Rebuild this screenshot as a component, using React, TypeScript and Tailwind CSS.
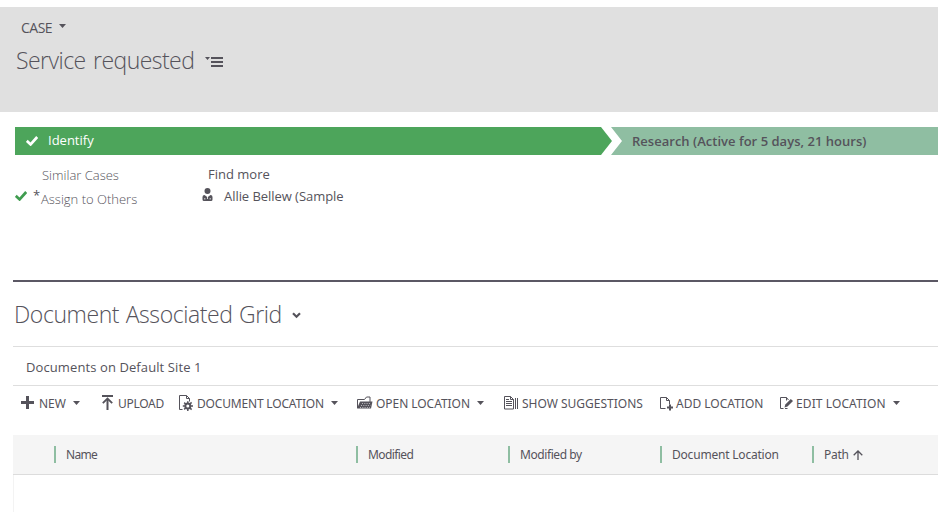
import type { ReactNode } from 'react';

function Caret({ className = '' }: { className?: string }) {
  return (
    <svg width="7" height="4" viewBox="0 0 7 4" className={`shrink-0 ${className}`}>
      <path d="M0 0h7L3.5 4z" fill="currentColor" />
    </svg>
  );
}

function Check({ className }: { className: string }) {
  return (
    <svg width="12" height="10" viewBox="0 0 12 10" className={`shrink-0 ${className}`}>
      <path d="M.8 4.8l3.8 3.6L11.2 1" fill="none" stroke="currentColor" strokeWidth="2.7" />
    </svg>
  );
}

const icons: Record<string, ReactNode> = {
  plus: <path d="M0 6.5h13M6.5 0v13" stroke="currentColor" strokeWidth="3" fill="none" />,
  upload: (
    <>
      <path d="M0 0h11v2H0zM4.5 4h2v11h-2z" fill="currentColor" />
      <path d="M.8 8.2L5.5 3.5l4.7 4.7" stroke="currentColor" strokeWidth="1.8" fill="none" />
    </>
  ),
  gearDoc: (
    <>
      <path d="M3.5 14.5h-3V.5h7l3 3v3M7.5.5v3h3" stroke="currentColor" fill="none" />
      <circle cx="8.8" cy="11" r="2.5" stroke="currentColor" strokeWidth="2" fill="none" />
      <path d="M8.8 6.2v2M8.8 14v2M3.8 11h2M12 11h2.2M5.2 7.6l1.6 1.6M10.8 12.8l1.8 1.8M5.2 14.4l1.6-1.6M10.8 9.2l1.8-1.8" stroke="currentColor" strokeWidth="1.5" />
    </>
  ),
  folder: (
    <>
      <path d="M.5 12V3.5h7l2-2.5h3.5v5" stroke="currentColor" fill="none" />
      <path d="M3 5.5h12.5l-1.5 7H0z" fill="currentColor" />
      <path d="M5 7.5h9M4 9.5h9.5M3 11.5h10" stroke="#fff" strokeWidth=".6" strokeDasharray="1 1.3" />
    </>
  ),
  pages: (
    <>
      <path d="M.5.5h6l3 3v9.5H.5zM6.5.5v3h3M11.5 2v11M13.5 2v11" stroke="currentColor" fill="none" />
      <path d="M2 3.5h3M2 5.5h6M2 7.5h6M2 9.5h6" stroke="currentColor" />
    </>
  ),
  addDoc: (
    <>
      <path d="M5.5 11.5h-5V.5h6l3 3v4M6.5.5v3h3" stroke="currentColor" fill="none" />
      <path d="M7 10.5h6M10 7.5v6" stroke="currentColor" strokeWidth="2" />
    </>
  ),
  editDoc: (
    <>
      <path d="M3.5 11.5h-3V.5h6l2 2.5M6.5.5v3M5 11.5h2.5" stroke="currentColor" fill="none" />
      <path d="M4.5 10.5l.8-3L10.8 2l2.2 2-5.5 5.6z" fill="currentColor" />
    </>
  ),
};

function Command({ icon, iw, ih, iconClass, label, labelClass, caret = false, className }: {
  icon: string; iw: number; ih: number; iconClass: string; label: string; labelClass: string; caret?: boolean; className: string;
}) {
  return (
    <div className={`flex h-full shrink-0 items-start ${className}`}>
      <svg width={iw} height={ih} viewBox={`0 0 ${iw} ${ih}`} className={`shrink-0 ${iconClass}`}>{icons[icon]}</svg>
      <span className={`mt-[9px] shrink-0 text-[12px] leading-[18px] ${labelClass}`}>{label}</span>
      {caret && <Caret className="mt-[15px] ml-auto" />}
    </div>
  );
}

function Column({ label, labelClass, className, children }: { label: string; labelClass: string; className: string; children?: ReactNode }) {
  return (
    <div className={`flex shrink-0 items-center ${className}`}>
      <div className="h-[17px] w-[2px] bg-[#8fbea2]" />
      <span className={`ml-[10px] ${labelClass}`}>{label}</span>
      {children}
    </div>
  );
}

export default function App() {
  return (
    <div className="h-[512px] w-[938px] overflow-hidden bg-white pt-[7px] font-['Open_Sans','Noto_Sans',sans-serif] whitespace-nowrap text-[#55535b]">
      <header className="h-[105px] bg-[#e0e0e0] pt-[11px]">
        <div className="flex h-5 items-center pl-[21px]">
          <span className="w-[33px] text-[14px] leading-5 tracking-[-0.5px]">CASE</span>
          <Caret className="mb-[4px] ml-[5px]" />
        </div>
        <div className="flex h-11 items-center pl-4">
          <h1 className="w-[189px] text-[23px] leading-8 font-light tracking-[-0.55px] [word-spacing:2px]">Service requested</h1>
          <svg width="18" height="10" viewBox="0 0 18 10" className="mt-[4px]">
            <path d="M0 0h5L2.5 3zM6 0h12v2H6zM6 4h12v2H6zM6 8h12v2H6z" fill="currentColor" />
          </svg>
        </div>
      </header>

      <section className="h-[168px] pt-[15px] pl-[15px]">
        <div className="flex h-7">
          <div className="flex w-[597px] items-center bg-[#4da55b] pl-[11px] text-white [clip-path:polygon(0_0,586px_0,100%_50%,586px_100%,0_100%)]">
            <Check className="" />
            <span className="ml-[10px] text-[13px]">Identify</span>
          </div>
          <div className="-ml-px flex flex-1 items-center bg-[#8fbea2] pt-px pl-[21px] text-[13px] font-semibold tracking-[0.02px] [clip-path:polygon(0_0,100%_0,100%_100%,0_100%,11px_50%)]">
            Research (Active for 5 days, 21 hours)
          </div>
        </div>
        <div className="flex pt-2 text-[13px] leading-[22px]">
          <div className="w-[187px] font-light">
            <div className="mt-px pl-[27px]">Similar Cases</div>
            <div className="mt-[2px] flex">
              <Check className="mt-[3px] text-[#3f9c4f]" />
              <span className="ml-[6px] w-[8px] text-[13px] leading-[15px] font-normal">*</span>
              <span>Assign to Others</span>
            </div>
          </div>
          <div>
            <div className="pl-[6px]">Find more</div>
            <div className="flex">
              <svg width="11" height="13" viewBox="0 0 11 13" className="mt-[3px]">
                <circle cx="5.5" cy="3" r="3" fill="currentColor" />
                <path d="M.5 11.5V9Q.5 7 2.5 7L5.5 9.3 8.5 7Q10.5 7 10.5 9v2.5Q10.5 13 9 13H2Q.5 13 .5 11.5z" fill="currentColor" />
                <path d="M5.5 9v2M2.8 10v1.5M8.2 10v1.5" stroke="#fff" strokeWidth=".8" />
              </svg>
              <span className="ml-[11px] tracking-[-0.05px]">Allie Bellew (Sample</span>
            </div>
          </div>
        </div>
      </section>

      <main className="ml-[13px]">
        <div className="flex h-[66px] items-center border-t-2 border-[#5b5864] pl-px">
          <h2 className="w-[278px] text-[23px] leading-8 font-light tracking-[-0.42px] [word-spacing:1px]">Document Associated Grid</h2>
          <svg width="9" height="7" viewBox="0 0 9 7" className="mt-[3px]">
            <path d="M1 1.3l3.5 3.5L8 1.3" fill="none" stroke="currentColor" strokeWidth="2.2" />
          </svg>
        </div>
        <div className="flex h-[39px] items-center border-t border-[#dedede] pt-[3px] pl-[13px] text-[13px] tracking-[0.1px]">Documents on Default Site 1</div>
        <div className="flex h-[50px] border-t border-[#dedede] pl-2 font-['Noto_Sans',sans-serif]">
          <Command icon="plus" iw={13} ih={13} iconClass="mt-[10px] mr-[5px]" label="NEW" labelClass="" caret className="w-[59px]" />
          <Command icon="upload" iw={11} ih={15} iconClass="mt-[9px] mr-[5px]" label="UPLOAD" labelClass="tracking-[-0.3px]" className="ml-[22px] w-[62px]" />
          <Command icon="gearDoc" iw={14} ih={16} iconClass="mt-[9px] mr-[4px]" label="DOCUMENT LOCATION" labelClass="tracking-[-0.18px]" caret className="ml-[15px] w-[159px]" />
          <Command icon="folder" iw={16} ih={13} iconClass="mt-[10px] mr-[3px]" label="OPEN LOCATION" labelClass="tracking-[-0.05px]" caret className="ml-[19px] w-[127px]" />
          <Command icon="pages" iw={14} ih={14} iconClass="mt-[10px] mr-[4px]" label="SHOW SUGGESTIONS" labelClass="" className="ml-[20px] w-[139px]" />
          <Command icon="addDoc" iw={13} ih={14} iconClass="mt-[11px] mr-[3px]" label="ADD LOCATION" labelClass="" className="ml-[17px] w-[103px]" />
          <Command icon="editDoc" iw={13} ih={12} iconClass="mt-[11px] mr-[3px]" label="EDIT LOCATION" labelClass="tracking-[0.1px]" caret className="ml-[17px] w-[120px]" />
        </div>
        <div className="flex h-10 border-b border-[#dcdcdc] bg-[#f5f5f5] pl-[41px] font-['Noto_Sans',sans-serif] text-[12px]">
          <Column label="Name" labelClass="tracking-[-0.7px]" className="w-[302px]" />
          <Column label="Modified" labelClass="tracking-[-0.6px]" className="w-[152px]" />
          <Column label="Modified by" labelClass="tracking-[-0.42px]" className="w-[152px]" />
          <Column label="Document Location" labelClass="tracking-[-0.2px]" className="w-[152px]" />
          <Column label="Path" labelClass="tracking-[-0.25px]" className="w-[120px]">
            <svg width="10" height="10" viewBox="0 0 10 10" className="ml-[4px]">
              <path d="M5 10V1M.7 5.2L5 1l4.3 4.2" stroke="currentColor" strokeWidth="1.3" fill="none" />
            </svg>
          </Column>
        </div>
        <div className="h-10 border-l border-[#f3f3f3]" />
      </main>
    </div>
  );
}
